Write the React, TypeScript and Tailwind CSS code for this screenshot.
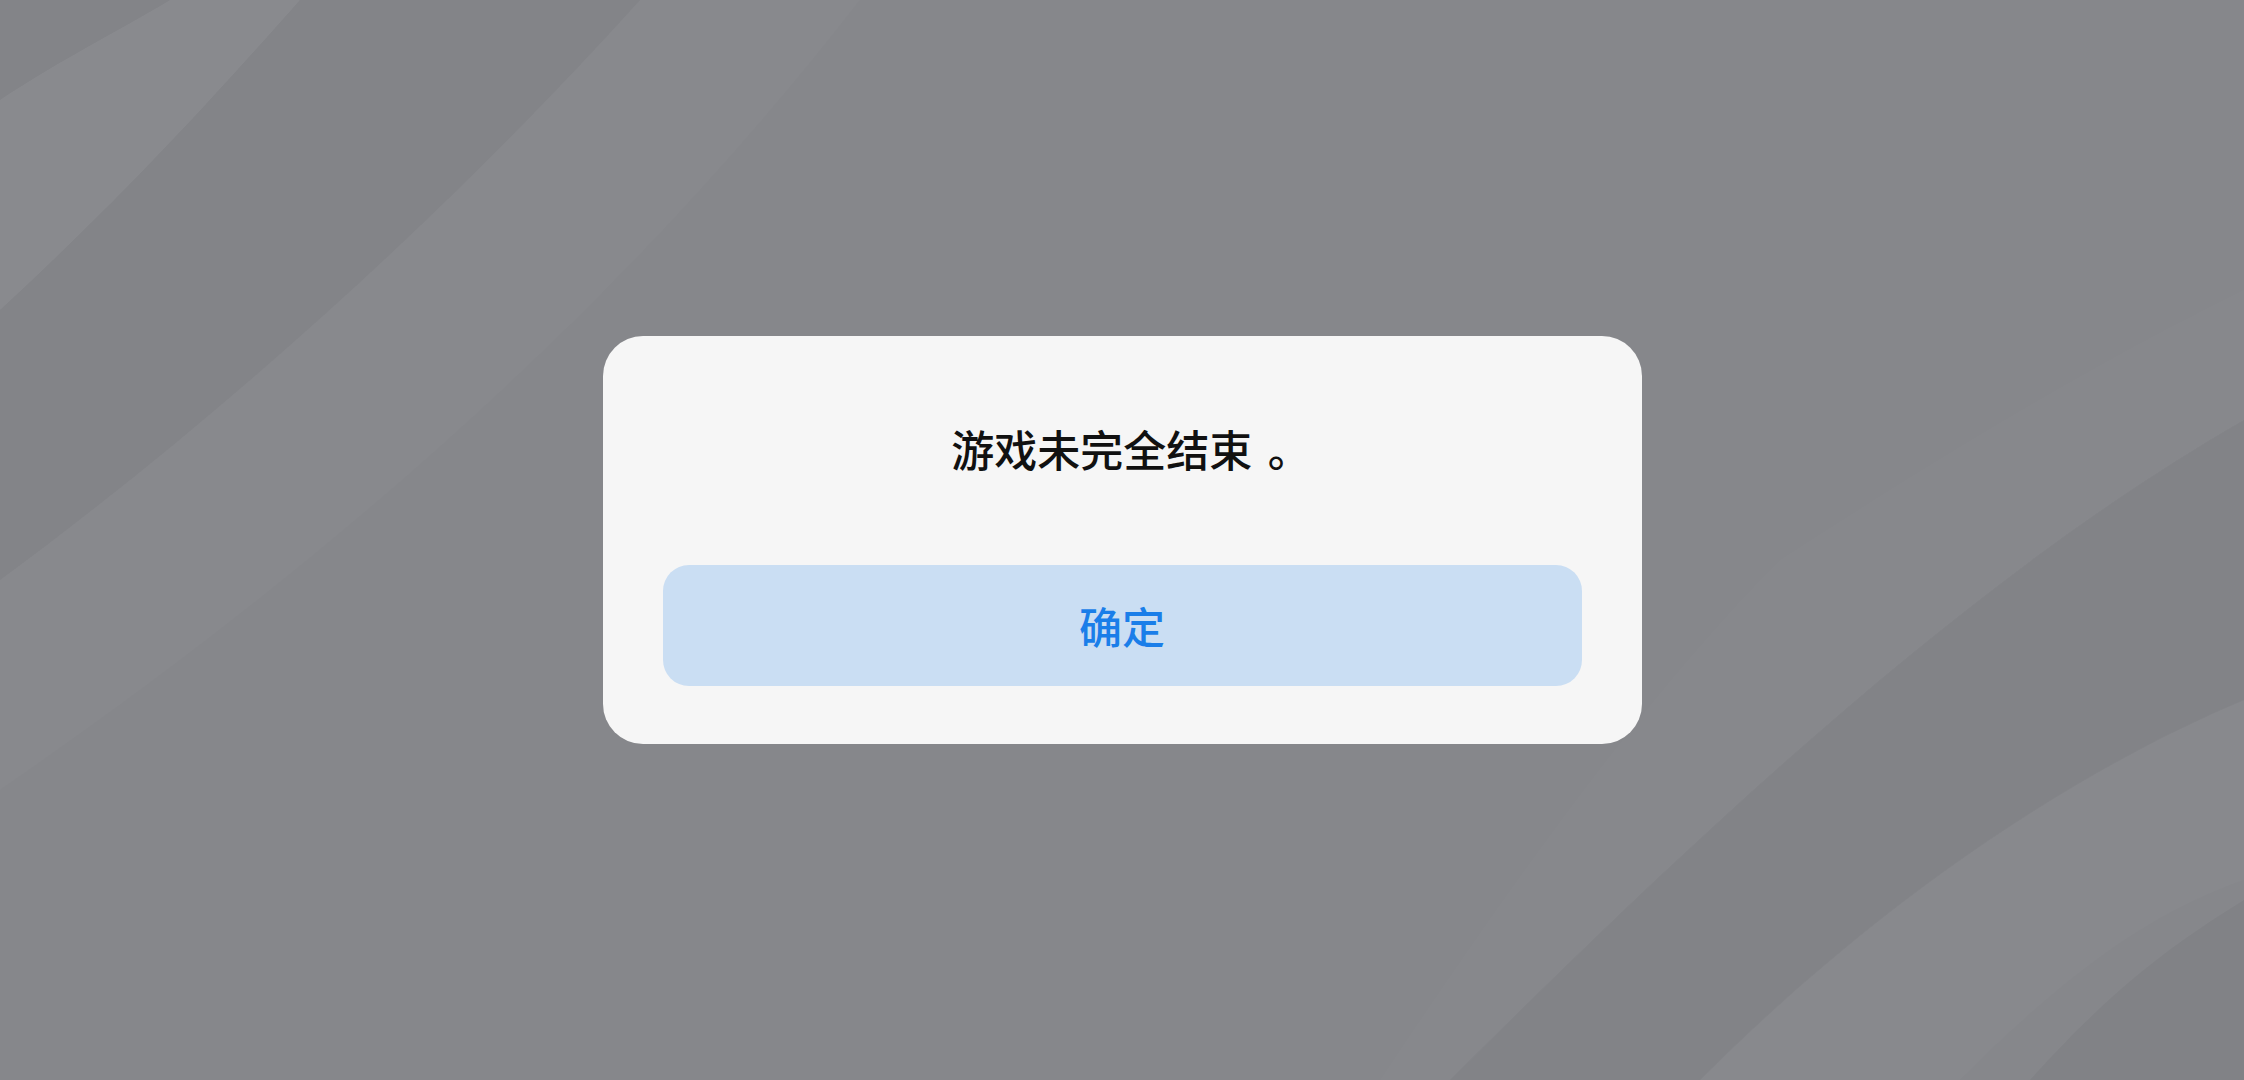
import React from "react";

const cjk = { fontFamily: '"Noto Sans CJK SC", "Noto Sans", sans-serif' };

function Wallpaper() {
  return (
    <svg
      className="pointer-events-none absolute inset-0 h-full w-full"
      viewBox="0 0 2244 1080"
      preserveAspectRatio="none"
    >
      {/* left sweep */}
      <path
        d="M0,100 C60,60 120,30 170,0 L300,0 C220,90 130,190 0,310 Z"
        fill="#ffffff"
        opacity="0.03"
      />
      <path
        d="M0,310 C130,190 220,90 300,0 L640,0 C450,210 230,410 0,580 Z"
        fill="#000000"
        opacity="0.02"
      />
      <path
        d="M0,580 C230,410 450,210 640,0 L860,0 C620,310 320,570 0,790 Z"
        fill="#ffffff"
        opacity="0.018"
      />
      <path
        d="M0,0 L170,0 C120,30 60,60 0,100 Z"
        fill="#000000"
        opacity="0.02"
      />
      {/* right sweep */}
      <path
        d="M1780,560 C1950,450 2100,360 2244,290 L2244,420 C2000,560 1750,780 1450,1080 L1380,1080 C1500,900 1640,700 1780,560 Z"
        fill="#ffffff"
        opacity="0.015"
      />
      <path
        d="M1450,1080 C1750,780 2000,560 2244,420 L2244,700 C2100,760 1900,880 1700,1080 Z"
        fill="#000000"
        opacity="0.025"
      />
      <path
        d="M1700,1080 C1900,880 2100,760 2244,700 L2244,880 C2160,910 2080,960 1960,1080 Z"
        fill="#ffffff"
        opacity="0.018"
      />
      <path
        d="M2030,1080 C2120,980 2180,940 2244,900 L2244,1080 Z"
        fill="#000000"
        opacity="0.035"
      />
    </svg>
  );
}

export default function App() {
  return (
    <div className="relative flex h-[1080px] w-[2244px] items-center justify-center overflow-hidden bg-[#86878b]">
      <Wallpaper />
      <div
        className="relative flex w-[1039px] flex-col items-center rounded-[40px] bg-[#f6f6f6] px-[60px] pb-[58px] pt-[82px]"
        style={cjk}
      >
        <p className="pl-[18px] text-[43px] font-medium leading-[60px] text-[#111111]">
          游戏未完全结束 <span className="ml-[6px]">。</span>
        </p>
        <button className="mt-[87px] flex h-[121px] w-full items-center justify-center rounded-[26px] bg-[#cadef3] text-[43px] font-medium text-[#1a7ee9]">
          确定
        </button>
      </div>
    </div>
  );
}
